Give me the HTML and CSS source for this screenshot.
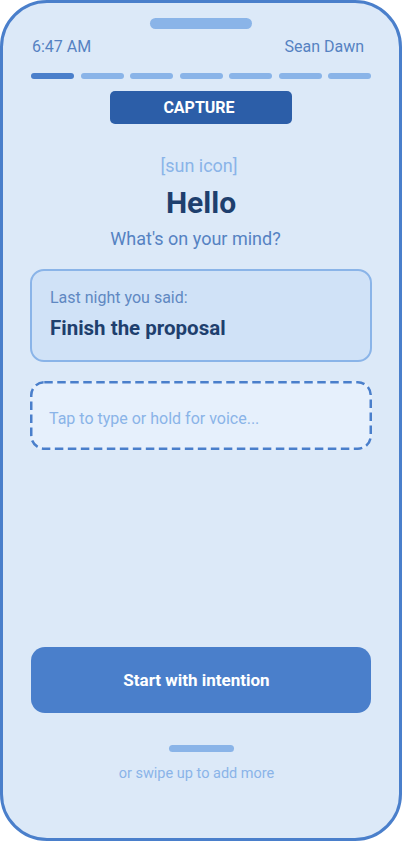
FILE: index.html
```html
<!DOCTYPE html>
<html lang="en">
<head>
    <meta charset="UTF-8">
    <meta name="viewport" content="width=device-width, initial-scale=1.0">
    <title>Capture</title>
    <link rel="stylesheet" href="styles.css">
</head>
<body>
    <div class="phone">
        <div class="notch"></div>

        <div class="status">
            <span>6:47 AM</span>
            <span>Sean Dawn</span>
        </div>

        <div class="progress">
            <span class="seg active"></span>
            <span class="seg"></span>
            <span class="seg"></span>
            <span class="seg"></span>
            <span class="seg"></span>
            <span class="seg"></span>
            <span class="seg"></span>
        </div>

        <div class="mode">CAPTURE</div>

        <div class="icon-placeholder">[sun icon]</div>
        <h1 class="greeting">Hello</h1>
        <p class="prompt">What's on your mind?</p>

        <div class="card">
            <div class="card-label">Last night you said:</div>
            <div class="card-text">Finish the proposal</div>
        </div>

        <div class="entry">
            <!-- dashed outline drawn in svg so the dash length matches -->
            <svg class="entry-outline" width="342" height="69">
                <rect x="1.25" y="1.25" width="339.5" height="66.5" rx="13" ry="13"></rect>
            </svg>
            <span class="entry-text">Tap to type or hold for voice...</span>
        </div>

        <div class="spacer"></div>

        <button class="start">Start with intention</button>

        <div class="home-bar"></div>
        <div class="hint">or swipe up to add more</div>
    </div>
</body>
</html>
```

FILE: styles.css
```css
body {
    margin: 0;
    background-color: #fff;
    font-family: Roboto, "Liberation Sans", sans-serif;
}

.phone {
    box-sizing: border-box;
    width: 402px;
    height: 841px;
    border: 3px solid #4a7fcb;
    border-radius: 47px;
    background-color: #dce9f8;
    padding: 15px 27px 0;
    display: flex;
    flex-direction: column;
}

.notch {
    align-self: center;
    width: 102px;
    height: 11px;
    border-radius: 6px;
    background-color: #8ab4e8;
}

.status {
    display: flex;
    justify-content: space-between;
    margin: 8px 8px 0 2px;
    font-size: 16px;
    line-height: 20px;
    color: #5582c2;
}

.progress {
    display: flex;
    gap: 6.5px;
    margin: 16px 1px 0;
}

.seg {
    flex: 1;
    height: 6px;
    border-radius: 3px;
    background-color: #8ab4e8;
}

.seg.active {
    background-color: #4a7fcb;
}

.mode {
    align-self: center;
    width: 182px;
    height: 33px;
    margin-top: 12px;
    border-radius: 5px;
    background-color: #2c5ea8;
    color: #fff;
    font-size: 16px;
    font-weight: 700;
    line-height: 33px;
    text-align: center;
    padding-right: 4px;
    box-sizing: border-box;
}

.icon-placeholder {
    margin-top: 31px;
    padding-right: 4px;
    text-align: center;
    font-size: 18px;
    line-height: 22px;
    color: #8ab4e8;
}

.greeting {
    margin: 8px 0 0;
    text-align: center;
    font-size: 30px;
    line-height: 36px;
    font-weight: 700;
    color: #1e3f6e;
}

.prompt {
    margin: 7px 0 0;
    padding-right: 11px;
    text-align: center;
    font-size: 18px;
    line-height: 22px;
    color: #5582c2;
}

.card {
    box-sizing: border-box;
    height: 93px;
    margin-top: 19px;
    padding: 17px 18px 0;
    border: 2px solid #8ab4e8;
    border-radius: 14px;
    background-color: #d0e2f7;
}

.card-label {
    font-size: 16px;
    line-height: 20px;
    color: #5f88c2;
}

.card-text {
    margin-top: 8px;
    font-size: 20.5px;
    line-height: 24px;
    font-weight: 700;
    color: #1e3f6e;
}

.entry {
    position: relative;
    box-sizing: border-box;
    height: 69px;
    margin-top: 19px;
    padding: 28px 19px 0;
    border-radius: 14px;
    background-color: #e6f0fc;
}

.entry-outline {
    position: absolute;
    top: 0;
    left: 0;
}

.entry-outline rect {
    fill: none;
    stroke: #4a7fcb;
    stroke-width: 2.5;
    stroke-dasharray: 8.5 4.5;
}

.entry-text {
    display: block;
    font-size: 16px;
    line-height: 20px;
    color: #8ab4e8;
}

.spacer {
    flex: 1;
}

.start {
    height: 66px;
    margin: 0 1px;
    padding: 0 9px 0 0;
    border: none;
    border-radius: 14px;
    background-color: #4a7fcb;
    color: #fff;
    font-family: inherit;
    font-size: 17px;
    font-weight: 700;
}

.home-bar {
    align-self: center;
    width: 65px;
    height: 7px;
    margin-top: 32px;
    border-radius: 4px;
    background-color: #8ab4e8;
}

.hint {
    margin: 13px 0 55px;
    padding-right: 9px;
    text-align: center;
    font-size: 14.5px;
    line-height: 18px;
    color: #8ab4e8;
}
```
